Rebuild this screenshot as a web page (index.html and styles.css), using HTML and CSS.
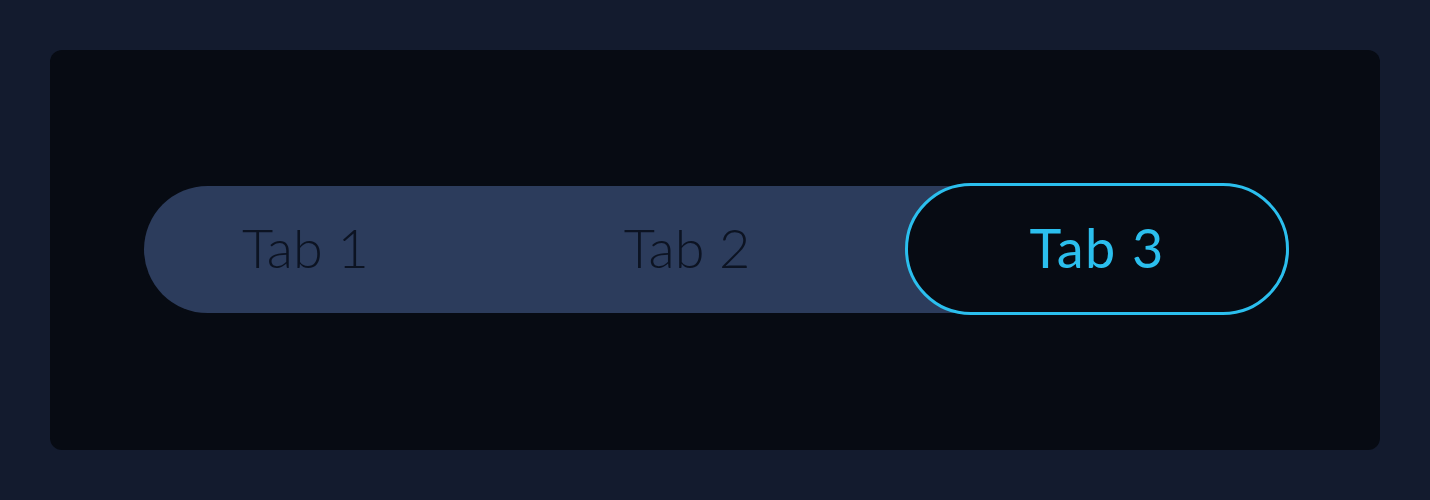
FILE: index.html
```html
<!DOCTYPE html>
<html lang="en">
<head>
<meta charset="utf-8">
<title>Tabs</title>
<link rel="stylesheet" href="styles.css">
</head>
<body>
<div class="card">
  <div class="tabs" role="tablist">
    <div class="tab" role="tab">Tab 1</div>
    <div class="tab" role="tab">Tab 2</div>
    <div class="tab tab-active" role="tab" aria-selected="true">Tab 3</div>
  </div>
</div>
</body>
</html>
```
FILE: styles.css
```css
html, body {
  margin: 0;
  padding: 0;
}
body {
  background: #131b2e;
  width: 1430px;
  height: 500px;
  padding: 50px;
  box-sizing: border-box;
  font-family: Lato, "Open Sans", "DejaVu Sans", sans-serif;
}
.card {
  height: 400px;
  background: #070b13;
  border-radius: 12px;
  padding: 0 91px 0 94px;
  display: flex;
  align-items: center;
}
.tabs {
  flex: 1;
  height: 127px;
  margin-top: -1px;
  background: #2c3c5c;
  border-radius: 64px;
  display: grid;
  grid-template-columns: 1fr 1fr 1fr;
}
.tab {
  display: flex;
  align-items: center;
  padding-left: 98px;
  padding-bottom: 4px;
  font-size: 54px;
  font-weight: 300;
  color: #0c1322;
  letter-spacing: 0;
}
.tab-active {
  margin: -3px 0 -2px -2px;
  padding-left: 0;
  justify-content: center;
  border: 3px solid #2bbfee;
  border-radius: 66px;
  background: #070b13;
  color: #2bbfee;
  font-weight: 400;
  letter-spacing: 1.5px;
}
```
